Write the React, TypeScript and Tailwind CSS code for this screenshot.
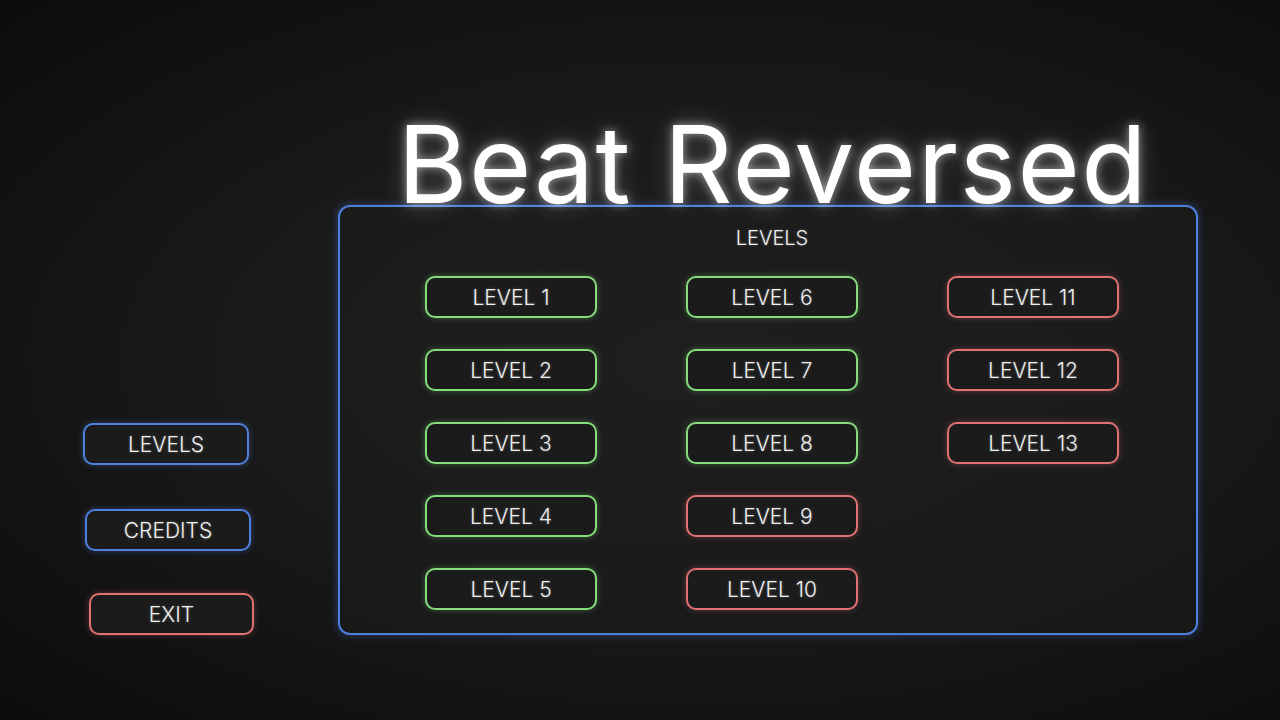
const levels = [
  { n: 1, ok: true },
  { n: 6, ok: true },
  { n: 11, ok: false },
  { n: 2, ok: true },
  { n: 7, ok: true },
  { n: 12, ok: false },
  { n: 3, ok: true },
  { n: 8, ok: true },
  { n: 13, ok: false },
  { n: 4, ok: true },
  { n: 9, ok: false },
  { n: 0, ok: false },
  { n: 5, ok: true },
  { n: 10, ok: false },
];

function NeonButton({
  label,
  tone,
  className = "",
}: {
  label: string;
  tone: "green" | "red" | "blue";
  className?: string;
}) {
  const ring =
    tone === "green"
      ? "border-[#84dc7a] shadow-[0_0_6px_rgba(132,220,122,0.35)]"
      : tone === "red"
        ? "border-[#e07272] shadow-[0_0_6px_rgba(224,114,114,0.35)]"
        : "border-[#4f80dc] shadow-[0_0_6px_rgba(79,128,220,0.4)]";

  return (
    <button
      type="button"
      className={`flex h-[42px] items-center justify-center rounded-[10px] border-2 bg-[#1b1b1b] text-[21px] font-light leading-none text-[#f0f0f0] [text-shadow:0_0_3px_rgba(255,255,255,0.3)] ${ring} ${className}`}
    >
      {label}
    </button>
  );
}

export default function App() {
  return (
    <main
      className="flex h-[720px] w-[1280px] overflow-hidden bg-[radial-gradient(ellipse_at_55%_50%,#212121_0%,#1a1a1a_45%,#0c0c0c_100%)]"
      style={{ fontFamily: "Inter, 'Noto Sans', sans-serif" }}
    >
      <nav className="flex w-[338px] shrink-0 flex-col pl-[83px] pt-[423px]">
        <NeonButton label="LEVELS" tone="blue" className="w-[166px]" />
        <NeonButton label="CREDITS" tone="blue" className="ml-[2px] mt-[44px] w-[166px]" />
        <NeonButton label="EXIT" tone="red" className="ml-[6px] mt-[42px] w-[165px]" />
      </nav>

      <section className="flex w-[860px] flex-col">
        {/* tight line box so the title's baseline sits right on the panel edge */}
        <h1 className="relative z-10 mt-[124px] pl-[10px] text-center text-[107px] font-normal leading-[80px] tracking-[1.5px] text-white [text-shadow:0_0_10px_rgba(255,255,255,0.55),0_0_24px_rgba(255,255,255,0.25)]">
          Beat Reversed
        </h1>

        <div className="mt-[1px] flex h-[430px] flex-col rounded-[12px] border-2 border-[#4d7fdc] bg-[#1c1c1c]/50 pl-[85px] pt-[19px] shadow-[0_0_8px_rgba(77,127,220,0.45)]">
          <p className="mr-[85px] pl-[8px] text-center text-[20px] font-light leading-[24px] text-[#f0f0f0] [text-shadow:0_0_3px_rgba(255,255,255,0.3)]">
            LEVELS
          </p>
          <div className="mt-[26px] grid grid-cols-[172px_172px_172px] gap-x-[89px] gap-y-[31px]">
            {levels.map((l, i) =>
              l.n === 0 ? (
                <div key={i} />
              ) : (
                <NeonButton
                  key={i}
                  label={`LEVEL ${l.n}`}
                  tone={l.ok ? "green" : "red"}
                  className="w-[172px]"
                />
              ),
            )}
          </div>
        </div>
      </section>
    </main>
  );
}
